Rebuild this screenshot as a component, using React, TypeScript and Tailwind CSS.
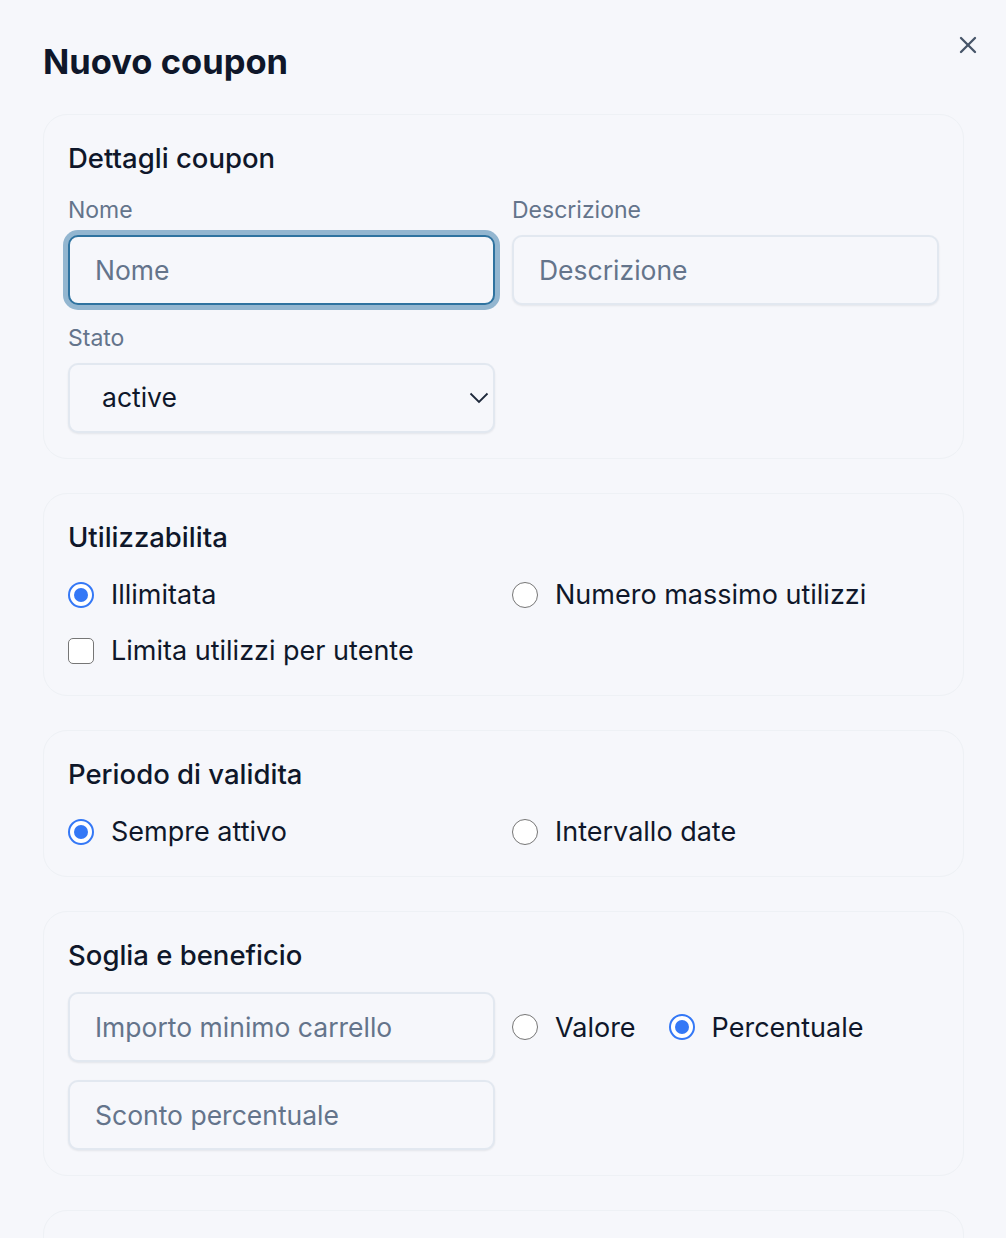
import { useState } from 'react';

const Radio = ({ checked }: { checked: boolean }) => (
    <span
        className={
            checked
                ? 'flex h-[26px] w-[26px] shrink-0 items-center justify-center rounded-full border-[2.5px] border-[#3478f6] bg-white'
                : 'flex h-[26px] w-[26px] shrink-0 items-center justify-center rounded-full border-[1.5px] border-[#767676] bg-white'
        }
    >
        {checked && <span className="h-[14px] w-[14px] rounded-full bg-[#3478f6]" />}
    </span>
);

const Option = ({ label, checked, onClick }: { label: string; checked: boolean; onClick?: () => void }) => (
    <button type="button" onClick={onClick} className="flex items-center gap-[17px] text-left text-[27px] leading-[39px] text-[#0f172a]">
        <Radio checked={checked} />
        {label}
    </button>
);

const Card = ({ title, children }: { title: string; children: React.ReactNode }) => (
    <section className="rounded-[24px] border border-[#eef1f5] bg-[#f6f7fb] px-[24px] pt-[24px] pb-[25px]">
        <h2 className="text-[27.5px] leading-[39px] font-medium text-[#0f172a]">{title}</h2>
        {children}
    </section>
);

const inputCls =
    'h-[70px] w-full rounded-[10px] border-2 border-[#e2e8f0] bg-[#f6f7fb] px-[25px] text-[26.5px] text-[#0f172a] placeholder:text-[#64748b] shadow-[0_1px_2px_rgba(15,23,42,0.08)] outline-none';

const App = () => {
    const [usage, setUsage] = useState('unlimited');
    const [perUser, setPerUser] = useState(false);
    const [period, setPeriod] = useState('always');
    const [benefit, setBenefit] = useState('percent');

    return (
        <div className="min-h-screen bg-[#f6f7fb] pl-[43px] pr-[42px] pb-10" style={{ fontFamily: 'Inter, "Noto Sans", sans-serif' }}>
            <div className="flex items-start justify-between pt-[38px]">
                <h1 className="text-[34.5px] leading-[48px] font-bold text-[#0f172a]">Nuovo coupon</h1>
                <button type="button" className="-mr-[18px] -mt-[7px] text-[#475569]">
                    <svg width="28" height="28" viewBox="0 0 24 24" fill="none" stroke="currentColor" strokeWidth="2" strokeLinecap="round">
                        <path d="M18 6 6 18" />
                        <path d="m6 6 12 12" />
                    </svg>
                </button>
            </div>

            <div className="mt-[28px] flex flex-col gap-[34px]">
                <Card title="Dettagli coupon">
                    <div className="mt-[16px] grid grid-cols-2 gap-x-[17px] gap-y-[17px]">
                        <label className="flex flex-col gap-[9px]">
                            <span className="text-[23px] leading-[32px] text-[#64748b]">Nome</span>
                            <input
                                placeholder="Nome"
                                className="h-[70px] w-full rounded-[10px] border-2 border-[#2f73a0] bg-[#f6f7fb] px-[25px] text-[26.5px] text-[#0f172a] placeholder:text-[#64748b] outline-none ring-[5px] ring-[#93b6d0]"
                            />
                        </label>
                        <label className="flex flex-col gap-[9px]">
                            <span className="text-[23px] leading-[32px] text-[#64748b]">Descrizione</span>
                            <input placeholder="Descrizione" className={inputCls} />
                        </label>
                        <label className="flex flex-col gap-[9px]">
                            <span className="text-[23px] leading-[32px] text-[#64748b]">Stato</span>
                            <div className="relative">
                                <select className="h-[70px] w-full appearance-none rounded-[10px] border-2 border-[#e2e8f0] bg-[#f6f7fb] pl-[32px] text-[26.5px] text-[#0f172a] shadow-[0_1px_2px_rgba(15,23,42,0.08)] outline-none">
                                    <option>active</option>
                                    <option>inactive</option>
                                </select>
                                <svg
                                    className="pointer-events-none absolute top-1/2 right-[6px] -translate-y-1/2 text-[#1e293b]"
                                    width="20"
                                    height="12"
                                    viewBox="0 0 20 12"
                                    fill="none"
                                    stroke="currentColor"
                                    strokeWidth="1.8"
                                >
                                    <path d="M1.5 1.5 10 10l8.5-8.5" />
                                </svg>
                            </div>
                        </label>
                    </div>
                </Card>

                <Card title="Utilizzabilita">
                    <div className="mt-[18px] grid grid-cols-2 gap-x-[17px] gap-y-[17px]">
                        <Option label="Illimitata" checked={usage === 'unlimited'} onClick={() => setUsage('unlimited')} />
                        <Option label="Numero massimo utilizzi" checked={usage === 'max'} onClick={() => setUsage('max')} />
                        <button
                            type="button"
                            onClick={() => setPerUser(!perUser)}
                            className="flex items-center gap-[17px] text-left text-[27px] leading-[39px] text-[#0f172a]"
                        >
                            <span className="h-[26px] w-[26px] shrink-0 rounded-[5px] border-[1.5px] border-[#767676] bg-white" />
                            Limita utilizzi per utente
                        </button>
                    </div>
                </Card>

                <Card title="Periodo di validita">
                    <div className="mt-[18px] grid grid-cols-2 gap-x-[17px]">
                        <Option label="Sempre attivo" checked={period === 'always'} onClick={() => setPeriod('always')} />
                        <Option label="Intervallo date" checked={period === 'range'} onClick={() => setPeriod('range')} />
                    </div>
                </Card>

                <Card title="Soglia e beneficio">
                    <div className="mt-[17px] grid grid-cols-2 gap-x-[17px]">
                        <div className="flex flex-col gap-[18px]">
                            <input placeholder="Importo minimo carrello" className={inputCls} />
                            <input placeholder="Sconto percentuale" className={inputCls} />
                        </div>
                        <div className="flex h-[70px] items-center gap-[33px]">
                            <Option label="Valore" checked={benefit === 'value'} onClick={() => setBenefit('value')} />
                            <Option label="Percentuale" checked={benefit === 'percent'} onClick={() => setBenefit('percent')} />
                        </div>
                    </div>
                </Card>

                <Card title="">
                    <div className="h-[120px]" />
                </Card>
            </div>
        </div>
    );
};

export default App;
